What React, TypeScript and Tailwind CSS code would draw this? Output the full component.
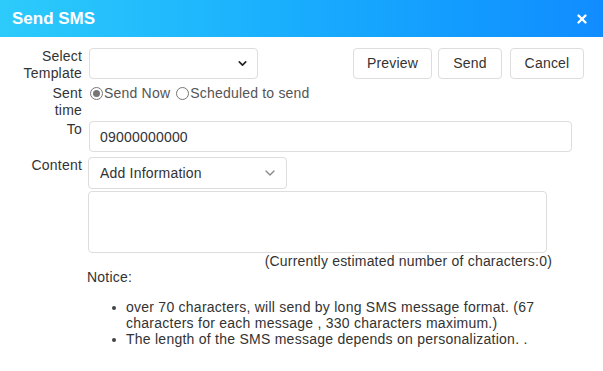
import { ChevronDown, X } from 'lucide-react';

const font = { fontFamily: '"Liberation Sans", Arial, sans-serif' };

function Label({ children }: { children: React.ReactNode }) {
  return <div className="w-[82px] shrink-0 text-right leading-[17px] text-[#333]">{children}</div>;
}

function Radio({ checked, label }: { checked?: boolean; label: string }) {
  return (
    <label className="flex items-center gap-px">
      <span className="flex size-[13px] items-center justify-center rounded-full border border-[#767676] bg-white">
        {checked && <span className="size-[7px] rounded-full bg-[#767676]" />}
      </span>
      <span>{label}</span>
    </label>
  );
}

function Bullet({ children }: { children: React.ReactNode }) {
  return (
    <li className="flex items-start">
      <span className="mt-[7px] mr-[10px] size-[4px] shrink-0 rounded-full bg-[#444]" />
      <span>{children}</span>
    </li>
  );
}

export default function App() {
  return (
    <div className="h-[371px] w-[603px] overflow-hidden bg-white text-[14px] tracking-[0.2px] text-[#333]" style={font}>
      {/* Header */}
      <div className="flex h-[37px] items-center justify-between bg-gradient-to-r from-[#2ccbfb] to-[#118cff] pl-3 pr-[14px]">
        <span className="text-[17px] font-bold tracking-normal text-white">Send SMS</span>
        <X className="size-[14px] text-white" strokeWidth={4} />
      </div>

      <div className="flex flex-col border-b-2 border-[#d6d6d6] pb-[28px] pt-[11px]">
        {/* Template + actions */}
        <div className="flex items-start gap-[7px]">
          <Label>
            Select
            <br />
            Template
          </Label>
          <div className="flex h-[31px] w-[169px] items-center justify-end rounded border border-[#ddd] pr-2">
            <ChevronDown className="size-[13px] text-[#222]" strokeWidth={3} />
          </div>
          <div className="ml-auto mr-[19px] flex gap-[6px]">
            <button className="h-[31px] w-[79px] rounded border border-[#ddd] text-[#333]">Preview</button>
            <button className="h-[31px] w-[64px] rounded border border-[#ddd] text-[#333]">Send</button>
            <button className="ml-[2px] h-[31px] w-[74px] rounded border border-[#ddd] text-[#333]">Cancel</button>
          </div>
        </div>

        {/* Sent time */}
        <div className="mt-[3px] flex items-start gap-[8px]">
          <Label>
            Sent
            <br />
            time
          </Label>
          <div className="flex gap-[6px] leading-[17px] text-[#555]">
            <Radio checked label="Send Now" />
            <Radio label="Scheduled to send" />
          </div>
        </div>

        {/* To */}
        <div className="mt-[2px] flex items-start gap-[7px]">
          <Label>To</Label>
          <div className="flex h-[31px] w-[483px] items-center rounded border border-[#ddd] px-[10px] leading-none">
            09000000000
          </div>
        </div>

        {/* Content */}
        <div className="mt-[5px] flex items-start gap-[6px]">
          <Label>Content</Label>
          <div className="flex flex-col">
            <div className="flex h-[32px] w-[199px] items-center justify-between rounded border border-[#ddd] pl-[11px] pr-[8px]">
              <span>Add Information</span>
              <ChevronDown className="size-[16px] text-[#888]" strokeWidth={2} />
            </div>
            <div className="mt-[2px] h-[62px] w-[459px] rounded border border-[#ddd]" />
            <div className="ml-[-40px] w-[504px] text-right leading-[16px]">
              (Currently estimated number of characters:0)
            </div>
            <div className="ml-[-1px] leading-[16px]">Notice:</div>
            <ul className="ml-[24px] mt-[14px] flex flex-col text-[14px] leading-[16px] tracking-[0.25px] text-[#333]">
              <Bullet>
                over 70 characters, will send by long SMS message format. (67
                <br />
                characters for each message , 330 characters maximum.)
              </Bullet>
              <Bullet>The length of the SMS message depends on personalization. .</Bullet>
            </ul>
          </div>
        </div>
      </div>
    </div>
  );
}
